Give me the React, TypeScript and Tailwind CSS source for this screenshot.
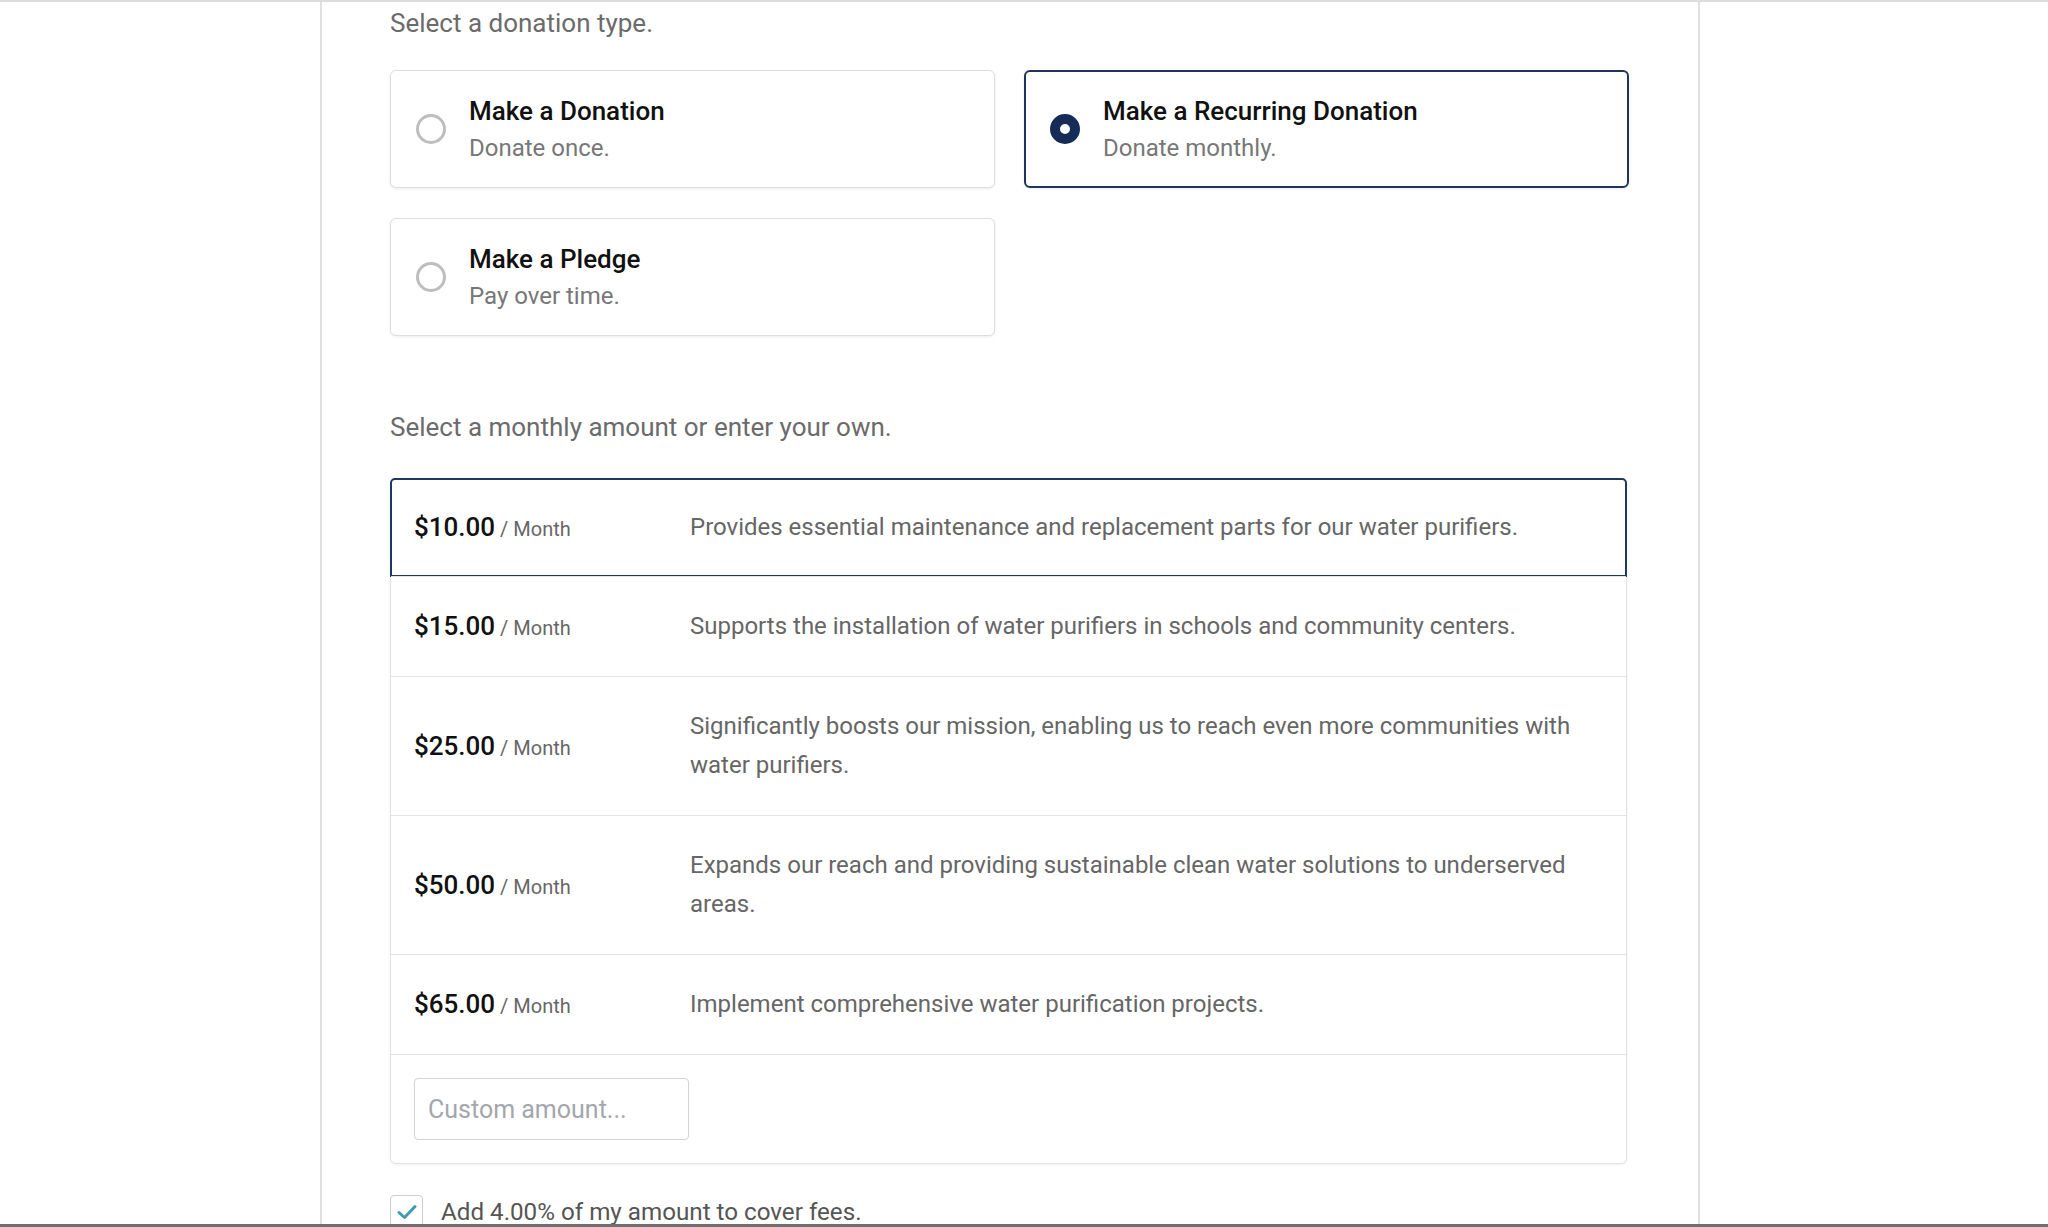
import React from 'react';

type DonationType = { title: string; sub: string; selected: boolean };

const types: DonationType[] = [
  { title: 'Make a Donation', sub: 'Donate once.', selected: false },
  { title: 'Make a Recurring Donation', sub: 'Donate monthly.', selected: true },
  { title: 'Make a Pledge', sub: 'Pay over time.', selected: false },
];

const amounts = [
  { value: '$10.00', text: 'Provides essential maintenance and replacement parts for our water purifiers.' },
  { value: '$15.00', text: 'Supports the installation of water purifiers in schools and community centers.' },
  {
    value: '$25.00',
    text: 'Significantly boosts our mission, enabling us to reach even more communities with water purifiers.',
  },
  { value: '$50.00', text: 'Expands our reach and providing sustainable clean water solutions to underserved areas.' },
  { value: '$65.00', text: 'Implement comprehensive water purification projects.' },
];

const TypeCard: React.FC<{ item: DonationType }> = ({ item }) => (
  <div
    className={
      item.selected
        ? 'flex items-center h-[118px] rounded-md border-2 border-[#1c345f] bg-white pl-[24px] shadow-[0_1px_3px_rgba(0,0,0,0.08)]'
        : 'flex items-center h-[118px] rounded-md border border-[#dedede] bg-white pl-[25px] shadow-[0_1px_3px_rgba(0,0,0,0.08)]'
    }
  >
    {item.selected ? (
      <div className="w-[30px] h-[30px] rounded-full border-[10px] border-[#142c56] bg-white shrink-0" />
    ) : (
      <div className="w-[30px] h-[30px] rounded-full border-[3px] border-[#bdbdbd] shrink-0" />
    )}
    <div className="ml-[23px] pt-[2px]">
      <div className="text-[26px] leading-[37px] font-medium text-[#111]">{item.title}</div>
      <div className="text-[24px] leading-[37px] text-[#777]">{item.sub}</div>
    </div>
  </div>
);

export default function App() {
  return (
    <div className="relative h-[1227px] overflow-hidden bg-white font-['Roboto',sans-serif] border-t-2 border-[#dcdcdc]">
      <div className="ml-[320px] w-[1380px] h-full border-l-2 border-r-2 border-[#e0e0e0] pl-[68px]">
        <div className="w-[1239px]">
          <div className="pt-[5px] text-[26px] leading-[32px] text-[#6b6b6b]">Select a donation type.</div>

          <div className="mt-[31px] grid grid-cols-2 gap-x-[29px] gap-y-[30px]">
            {types.map((t) => (
              <TypeCard key={t.title} item={t} />
            ))}
          </div>

          <div className="mt-[75px] text-[26px] leading-[32px] text-[#6b6b6b]">
            Select a monthly amount or enter your own.
          </div>

          <div className="mt-[35px] w-[1237px] rounded-md border border-[#e2e2e2] bg-white shadow-[0_1px_3px_rgba(0,0,0,0.06)]">
            {amounts.map((a, i) => (
              <div
                key={a.value}
                className={
                  i === 0
                    ? 'relative flex items-center py-[29px]'
                    : 'relative flex items-center py-[30px] border-t border-[#e2e2e2]'
                }
              >
                {i === 0 && (
                  <div className="absolute -inset-px rounded-t-[5px] border-2 border-[#1f3863] pointer-events-none" />
                )}
                <div className="w-[299px] pl-[23px] shrink-0 whitespace-nowrap">
                  <span className="text-[26px] font-medium text-[#111]">{a.value}</span>
                  <span className="text-[20px] text-[#666]"> / Month</span>
                </div>
                <div className="flex-1 pr-[24px] text-[24px] leading-[39px] text-[#666]">{a.text}</div>
              </div>
            ))}
            <div className="border-t border-[#e2e2e2] p-[23px]">
              <input
                className="w-[275px] h-[62px] rounded-[4px] border border-[#d4d4d8] px-[13px] text-[25px] text-[#333] outline-none placeholder:text-[#a3a6ad]"
                placeholder="Custom amount..."
              />
            </div>
          </div>

          <div className="mt-[31px] flex items-center">
            <div className="w-[33px] h-[33px] rounded-[4px] border border-[#cfcfcf] flex items-center justify-center">
              <svg width="20" height="16" viewBox="0 0 20 16" fill="none">
                <path d="M2 8.5l5.5 5L18 2.5" stroke="#3c9db0" strokeWidth="3" strokeLinecap="round" strokeLinejoin="round" />
              </svg>
            </div>
            <span className="ml-[18px] text-[24.2px] leading-[32px] text-[#555]">Add 4.00% of my amount to cover fees.</span>
          </div>
        </div>
      </div>
      <div className="absolute bottom-0 left-0 right-0 h-[3px] bg-[#6f6f6f]" />
    </div>
  );
}
